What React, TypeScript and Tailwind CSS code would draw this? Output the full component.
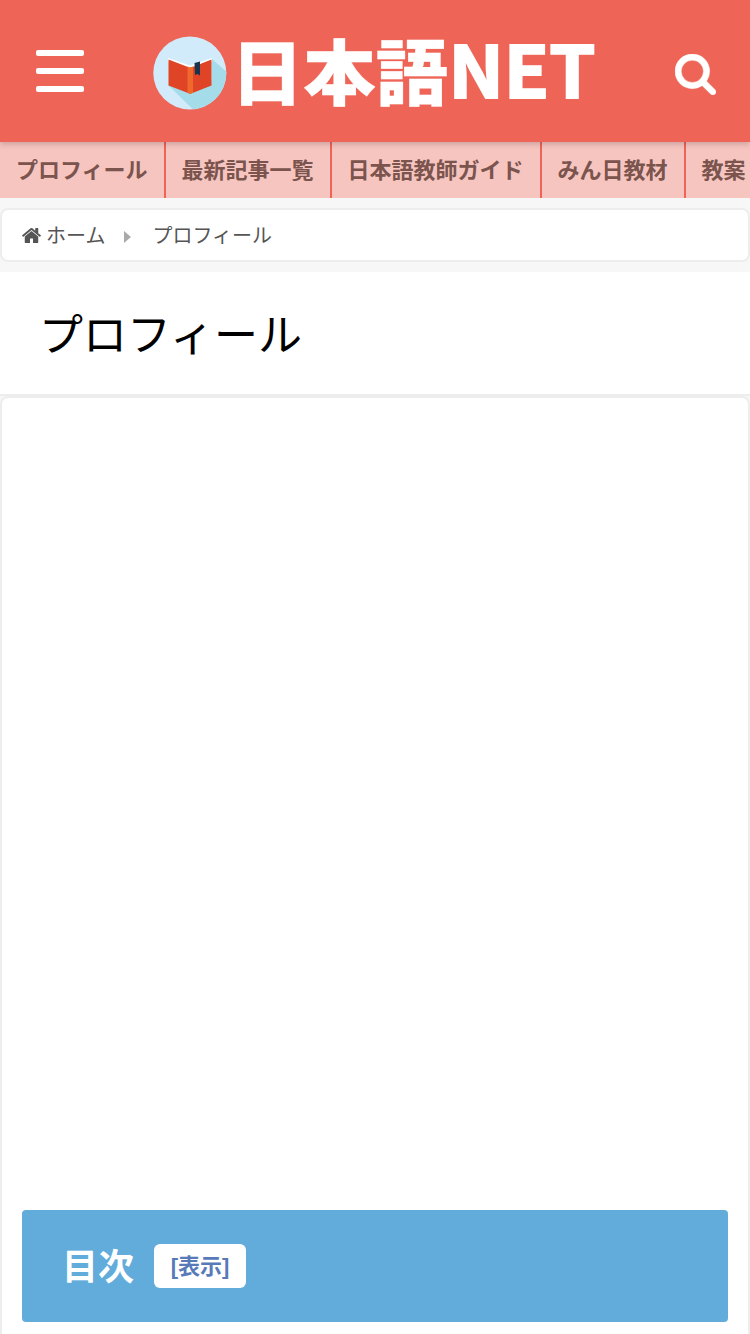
const navItems: string[] = ["プロフィール", "最新記事一覧", "日本語教師ガイド", "みん日教材", "教案"];

function Logo() {
  return (
    <svg
      className="block h-[142px] w-[450px] overflow-visible font-['Noto_Sans_CJK_JP',sans-serif]"
      viewBox="150 0 450 142"
      role="img"
      aria-label="日本語NET"
    >
      <defs>
        <clipPath id="disc">
          <circle cx="189.800" cy="73" r="36.500" />
        </clipPath>
      </defs>
      <circle cx="189.800" cy="73" r="36.500" fill="#d2ebfa" />
      <g clipPath="url(#disc)">
        <path d="M212 59 L245 88 L220 125 L168 85 L190 93 L212 85Z" fill="#a4dce9" />
        <path d="M168 85 L210 126 L245 110 L212 80 L190 93Z" fill="#a4dce9" />
      </g>
      <path d="M168 58 L190 65.500 L212 58 L212 62 L190 69 L168 62Z" fill="#fff" />
      <path d="M168.500 59.500 L188 67 L188 93 L168.500 85.500Z" fill="#e04427" />
      <path d="M192.500 67 L211.500 59.500 L211.500 85.500 L192.500 93Z" fill="#e04427" />
      <path d="M187.500 66.500 Q190 68 193 66.500 V92.500 Q190 95.500 187.500 92.500Z" fill="#f0692a" />
      <path d="M194.500 63 L200 61.500 V75.500 L197.500 74 L195 75Z" fill="#17344f" />
      <g fill="#fff" stroke="#fff" fontWeight="900">
        <text x="231" y="98.500" fontSize="71" strokeWidth="0.300" textLength="217" lengthAdjust="spacingAndGlyphs">
          日本語
        </text>
        <text x="448.500" y="98" fontSize="71" fontWeight="700" strokeWidth="2" textLength="147" lengthAdjust="spacingAndGlyphs">
          NET
        </text>
      </g>
    </svg>
  );
}

function SearchIcon() {
  return (
    <svg className="block h-[41px] w-[41px]" viewBox="0 128 1664 1664" fill="white">
      <path stroke="white" strokeWidth="16" d="M1152 832q0-185-131.500-316.500t-316.500-131.500-316.500 131.500-131.500 316.500 131.500 316.500 316.500 131.500 316.500-131.500 131.500-316.500zm512 832q0 52-38 90t-90 38q-54 0-90-38l-343-342q-179 124-399 124-143 0-273.500-55.500t-225-150-150-225-55.500-273.500 55.500-273.500 150-225 225-150 273.500-55.500 273.500 55.500 225 150 150 225 55.500 273.500q0 220-124 399l343 343q37 37 37 90z" />
    </svg>
  );
}

function HomeIcon() {
  return (
    <svg className="block h-[15px] w-[19px] shrink-0" viewBox="25 253 1614 1283" fill="#555">
      <path d="M1408 992v480q0 26-19 45t-45 19h-384v-384h-256v384h-384q-26 0-45-19t-19-45v-480q0-1 .5-3t.5-3l575-474 575 474q1 2 1 6zm223-69l-62 74q-8 9-21 11h-3q-13 0-21-7l-692-577-692 577q-12 8-24 7-13-2-21-11l-62-74q-8-10-7-23.500t11-21.500l719-599q32-26 76-26t76 26l244 204v-195q0-14 9-23t23-9h192q14 0 23 9t9 23v408l219 182q10 8 11 21.500t-7 23.500z" />
    </svg>
  );
}

export default function App() {
  return (
    <div className="flex h-[1334px] w-full flex-col overflow-hidden bg-[#f7f7f7] font-['Liberation_Sans','Noto_Sans_CJK_JP',sans-serif] text-[#555]">
      <header className="relative z-10 flex h-[142px] shrink-0 items-start bg-[#ee6557] pr-[34px] pl-9 shadow-[0_2px_6px_rgba(0,0,0,0.2)]">
        <button className="mt-[50px] flex w-12 flex-col gap-3" aria-label="メニュー">
          <span className="h-1.5 w-full rounded-xs bg-white" />
          <span className="h-1.5 w-full rounded-xs bg-white" />
          <span className="h-1.5 w-full rounded-xs bg-white" />
        </button>
        <div className="ml-[66px]">
          <Logo />
        </div>
        <button className="mt-[53.5px] ml-auto" aria-label="検索">
          <SearchIcon />
        </button>
      </header>
      <nav className="flex h-14 shrink-0 overflow-hidden bg-[#f7c5c0]">
        {navItems.map((item) => (
          <a
            key={item}
            className="flex h-14 shrink-0 items-center border-r-2 border-[#ee6557] px-4 pt-0.5 text-[22px] leading-none font-bold whitespace-nowrap text-[#7a544d]"
          >
            {item}
          </a>
        ))}
      </nav>
      <div className="mt-2.5 flex h-[54px] shrink-0 items-center rounded-lg border-2 border-[#ededed] bg-white pl-5 text-xl leading-none">
        <HomeIcon />
        <span className="ml-[5px] pt-0.5">ホーム</span>
        <svg className="mt-[3px] ml-[19px] h-3 w-[7px]" viewBox="0 0 7 12" fill="#aaa">
          <path d="M0 0L7 6L0 12Z" />
        </svg>
        <span className="ml-[21px] pt-0.5">プロフィール</span>
      </div>
      <div className="mt-2.5 flex h-[124px] shrink-0 items-center border-b-2 border-[#ededed] bg-white pl-[39px]">
        <h1 className="pt-[5px] text-[44px] leading-none text-black">プロフィール</h1>
      </div>
      <main className="flex flex-1 flex-col rounded-t-lg border-x-2 border-t-2 border-[#ededed] bg-white px-5 pb-3">
        <section className="mt-auto flex h-28 items-center rounded bg-[#62acdb] pl-10">
          <h2 className="pt-[3px] text-[36px] leading-none font-bold text-white">目次</h2>
          <button className="ml-5 flex h-11 w-[92px] items-center justify-center rounded-md bg-white pt-0.5 text-[22px] leading-none font-bold text-[#587ab9]">
            [表示]
          </button>
        </section>
      </main>
    </div>
  );
}
